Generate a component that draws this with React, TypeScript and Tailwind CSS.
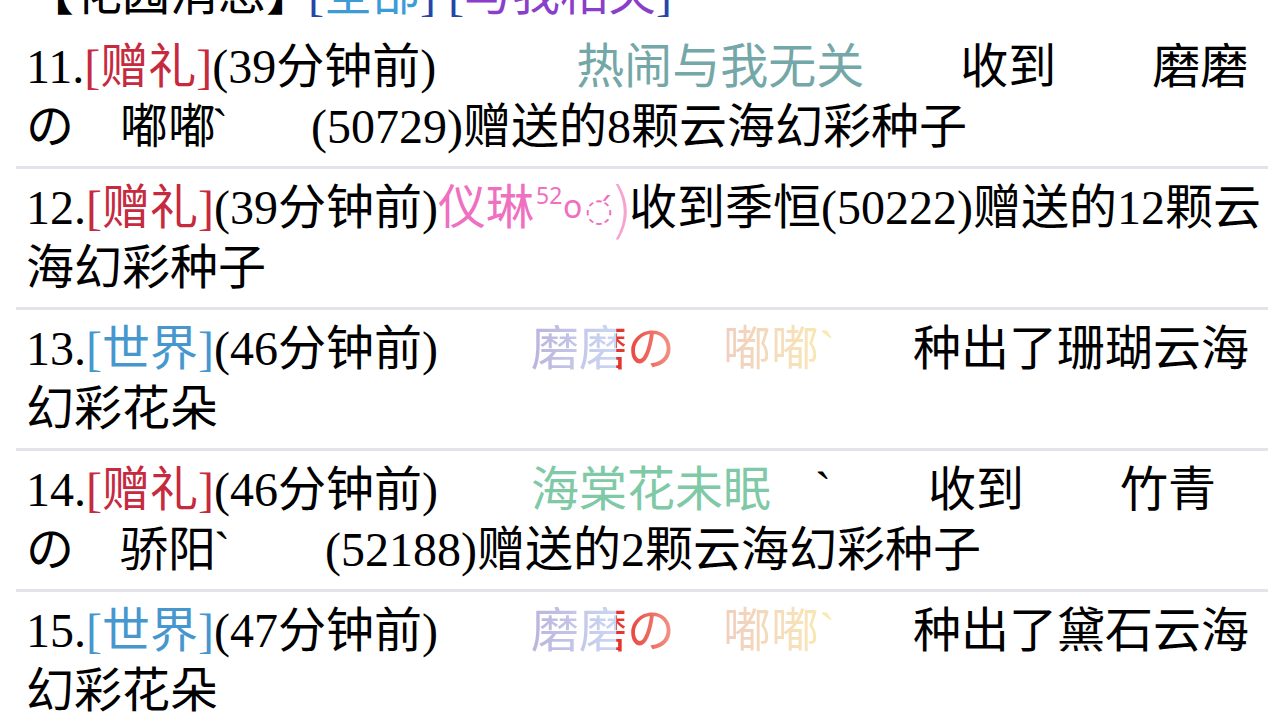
import React from "react"

// 花园消息 feed, fixed lines as in the screenshot
const Gift = () => <span className="text-[#c62a3e]">[赠礼]</span>
const World = () => <span className="text-[#4797cf]">[世界]</span>

function Prefix({ n, tag, t }: { n: number; tag: "gift" | "world"; t: number }) {
  return (
    <span>
      {n}.{tag === "gift" ? <Gift /> : <World />}({t}分钟前)
    </span>
  )
}

const Grave = ({ className = "" }: { className?: string }) => (
  <span className={"inline-block w-[16px] " + className}>ˋ</span>
)

function Line({ children }: { children: React.ReactNode }) {
  return <div className="h-[60px] whitespace-nowrap">{children}</div>
}

function Row({ first = false, children }: { first?: boolean; children: React.ReactNode }) {
  return (
    <div className={first ? "pt-0 pb-[9px] px-[10px]" : "border-t-[3px] border-[#e3e3ec] pt-[9px] pb-[9px] px-[10px]"}>
      {children}
    </div>
  )
}

function MomoName() {
  return (
    <>
      <span className="ml-[93px] bg-[linear-gradient(to_right,#bab4dc_0%,#cbd7f3_59%,#e62e28_59.5%,#f29a8c_100%)] bg-clip-text text-transparent">
        磨磨の
      </span>
      <span className="ml-[48px] bg-[linear-gradient(to_right,#f0cebf_0%,#f7e2b8_70%,#f9ecaa_100%)] bg-clip-text text-transparent">
        嘟嘟<Grave />
      </span>
    </>
  )
}

export default function App() {
  return (
    <div className="min-h-screen overflow-hidden bg-white text-black font-['Liberation_Serif','Noto_Sans_CJK_SC',serif] text-[48px] leading-[60px]">
      <div className="px-[16px]">
        {/* header, scrolled mostly out of view */}
        <div className="-mt-[36px] mb-[13px] h-[60px] whitespace-nowrap px-[10px]">
          <span>【花园消息】</span>
          <span className="-ml-[6px] text-[#2446a6]">
            [<span className="text-[#3d9bd6]">全部</span>]
          </span>{" "}
          <span className="text-[#2446a6]">
            [<span className="text-[#8a3fcb]">与我相关</span>]
          </span>
        </div>

        <Row first>
          <Line>
            <Prefix n={11} tag="gift" t={39} />
            <span className="ml-[140px] text-[#74a7a7]">热闹与我无关</span>
            <span className="ml-[96px]">收到</span>
            <span className="ml-[96px]">磨磨</span>
          </Line>
          <Line>
            <span>の</span>
            <span className="ml-[46px]">
              嘟嘟<Grave className="-ml-[4px]" />
            </span>
            <span className="ml-[83px]">(50729)赠送的8颗云海幻彩种子</span>
          </Line>
        </Row>

        <Row>
          <Line>
            <Prefix n={12} tag="gift" t={39} />
            <span className="text-[#ef6fc1]">
              仪琳
              <span className="inline-block w-[27px] pl-[2px] font-['Noto_Sans',sans-serif] text-[23px] leading-none align-[20px]">
                52
              </span>
              <span className="inline-block w-[24px] pl-[2px] font-['Noto_Sans',sans-serif] text-[32px] leading-none align-[6px]">
                o
              </span>
              <span className="inline-block w-[24px] font-['DejaVu_Sans',sans-serif] text-[32px] leading-none text-[#f06cbc] align-[3px]">
                ◌́
              </span>
              <span className="inline-block w-[20px] font-['DejaVu_Sans',sans-serif] text-[62px] leading-none font-light text-[#f8a2cf] align-[-7px]">
                )
              </span>
            </span>
            <span>收到季恒(50222)赠送的12颗云</span>
          </Line>
          <Line>海幻彩种子</Line>
        </Row>

        <Row>
          <Line>
            <Prefix n={13} tag="world" t={46} />
            <MomoName />
            <span className="ml-[78px]">种出了珊瑚云海</span>
          </Line>
          <Line>幻彩花朵</Line>
        </Row>

        <Row>
          <Line>
            <Prefix n={14} tag="gift" t={46} />
            <span className="ml-[93px] text-[#7fc9a7]">海棠花未眠</span>
            <span className="ml-[44px]">
              <Grave />
            </span>
            <span className="ml-[97px]">收到</span>
            <span className="ml-[96px]">竹青</span>
          </Line>
          <Line>
            <span>の</span>
            <span className="ml-[46px]">
              骄阳<Grave className="-ml-[2px]" />
            </span>
            <span className="ml-[95px]">(52188)赠送的2颗云海幻彩种子</span>
          </Line>
        </Row>

        <Row>
          <Line>
            <Prefix n={15} tag="world" t={47} />
            <MomoName />
            <span className="ml-[78px]">种出了黛石云海</span>
          </Line>
          <Line>幻彩花朵</Line>
        </Row>
      </div>
    </div>
  )
}
